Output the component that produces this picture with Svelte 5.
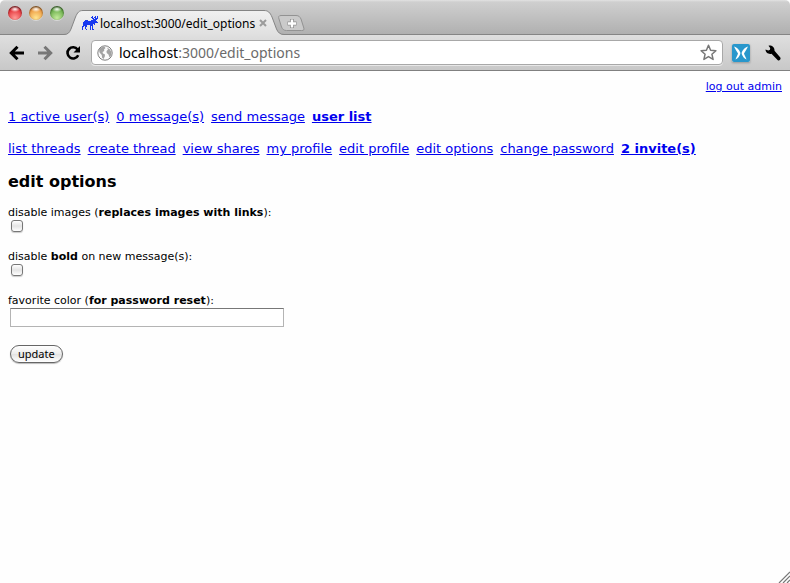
<script>
  let disableImages = $state(false);
  let disableBold = $state(false);
  let color = $state('');
  let address = 'edit_options';

  const userLinks = [
    { text: '1 active user(s)' },
    { text: '0 message(s)' },
    { text: 'send message' },
    { text: 'user list', bold: true }
  ];
  const mainLinks = [
    { text: 'list threads' },
    { text: 'create thread' },
    { text: 'view shares' },
    { text: 'my profile' },
    { text: 'edit profile' },
    { text: 'edit options' },
    { text: 'change password' },
    { text: '2 invite(s)', bold: true }
  ];
</script>

{#snippet links(items)}
  {#each items as item}
    <a href="#top" class:bold={item.bold}>{item.text}</a>
  {/each}
{/snippet}

<div class="window" id="top">
  <header>
    <div class="strip">
      <div class="lights">
        <button class="light red" aria-label="Close window"></button>
        <button class="light amber" aria-label="Minimize window"></button>
        <button class="light green" aria-label="Zoom window"></button>
      </div>
      <div class="tab">
        <svg class="shape" width="220" height="26" viewBox="0 0 220 26" aria-hidden="true">
          <defs>
            <linearGradient id="tabfill" x1="0" y1="0" x2="0" y2="1">
              <stop offset="0" stop-color="#f1f1f1" />
              <stop offset="1" stop-color="#dfdfdf" />
            </linearGradient>
          </defs>
          <path d="M0 24.5C4 24.5 5.500 22.500 7 19L11.500 7C13.500 2.500 15 .5 19 .5H200C204 .5 206 2.500 208 7L212.500 19C214 22.500 216 24.500 220 24.500V26H0Z" fill="url(#tabfill)" />
          <path d="M0 24.500C4 24.500 5.500 22.500 7 19L11.500 7C13.500 2.500 15 .5 19 .5H200C204 .5 206 2.500 208 7L212.500 19C214 22.500 216 24.500 220 24.500" fill="none" stroke="#858585" />
        </svg>
        <svg class="moose" width="16" height="14" viewBox="0 0 16 14" fill="#1738f0" shape-rendering="crispEdges" aria-hidden="true">
          <path d="M10 0h1v1h-1zM13 0h1v1h-1zM15 0h1v1h-1zM9 1h2v1H9zM12 1h2v1h-2zM15 1h1v1h-1zM10 2h2v1h-2zM13 2h3v1h-3zM11 3h4v1h-4zM3 4h3v1H3zM9 4h5v1H9zM2 5h13v1H2zM1 6h15v1H1zM1 7h12v1H1zM1 8h10v1H1zM12 8h1v1h-1zM1 9h4v1H1zM8 9h3v1H8zM0 10h2v1H0zM3 10h2v1H3zM8 10h1v4H8zM10 10h1v3h-1zM0 11h1v3H0zM3 11h1v2H3zM4 13h1v1H4zM10 13h2v1h-2z" />
        </svg>
        <span class="title">localhost:3000/edit_options</span>
        <button class="close" aria-label="Close tab">
          <svg width="8" height="8" viewBox="0 0 8 8"><path d="M1 1l6 6M7 1L1 7" stroke="#9b9b9b" stroke-width="2" /></svg>
        </button>
      </div>
      <button class="newtab" aria-label="New tab">
        <svg width="27" height="17" viewBox="0 0 27 17">
          <path d="M3 .5H18C21 .5 22 2 23 4L25.500 12C26.500 15 26 15.500 23.500 15.500H8.500C5.500 15.500 4.500 14 3.500 12L1 4C.3 2 .5 .5 3 .5Z" fill="#cacaca" stroke="#929292" />
          <path d="M14 4v9M9.500 8.500h9" stroke="#8e8e8e" stroke-width="4" />
          <path d="M14 4.500v8M10 8.500h8" stroke="#fff" stroke-width="2.400" />
        </svg>
      </button>
    </div>

    <div class="toolbar">
      <button aria-label="Back">
        <svg width="16" height="16" viewBox="0 0 16 16" fill="none" stroke="#000" stroke-width="3"><path d="M2.500 8H15M8.500 1.800L2.300 8l6.200 6.200" /></svg>
      </button>
      <button aria-label="Forward">
        <svg width="16" height="16" viewBox="0 0 16 16" fill="none" stroke="#777" stroke-width="3"><path d="M13.500 8H1M7.500 1.800L13.700 8l-6.200 6.200" /></svg>
      </button>
      <button aria-label="Reload">
        <svg width="16" height="16" viewBox="0 0 16 16"><path d="M12.600 4.500A5.600 5.600 0 1 0 13.200 10.200" fill="none" stroke="#000" stroke-width="2.600" /><path d="M15 1v6.500H8.500z" /></svg>
      </button>
      <div class="omnibox">
        <svg width="16" height="16" viewBox="0 0 16 16" aria-hidden="true">
          <circle cx="8" cy="8" r="7.200" fill="#fafafa" stroke="#7e7e7e" />
          <path d="M2 4.500C3.500 2.500 5.500 1.500 7.500 1.800L8.500 3 7 4.500 7.300 6 5.500 7 6 8.500 8 9.500 7.800 11.500 6.500 14 5 12.500 4.800 10 2.500 7.500zM10 2.500l3 2 1.500 3-.5 3-1.500 2-1-3-1.800-1.500L9.500 6l1.500-1.500z" fill="#a2a2a2" />
        </svg>
        <span class="url">localhost<i>:3000/{address}</i></span>
        <button aria-label="Bookmark this page">
          <svg width="17" height="17" viewBox="0 0 17 17"><path d="M8.500 1.300l2.100 4.900 5.300.5-4 3.500 1.200 5.200-4.600-2.800-4.600 2.800 1.200-5.200-4-3.500 5.300-.5z" fill="#fff" stroke="#777" stroke-width="1.500" stroke-linejoin="round" /></svg>
        </button>
      </div>
      <button class="ext" aria-label="Extension">
        <svg width="18" height="18" viewBox="0 0 18 18"><rect width="18" height="18" rx="2" fill="#2997cc" /><path d="M2 2.500C4.500 3.500 7 5 8.300 8.500L8.300 10C7.500 12 6 14.500 3.500 15.500 4 13.500 5.500 11.500 6 9.500 5 7.500 3 5 2 2.500zM16 2.500C13.500 3.500 11 5 9.700 8.500L9.700 10C10.500 12 12 14.500 14.500 15.500 14 13.500 12.500 11.500 12 9.500 13 7.500 15 5 16 2.500z" fill="#fff" /></svg>
      </button>
      <button class="wrench" aria-label="Settings">
        <svg width="16" height="16" viewBox="0 0 16 16"><path d="M3.500 .7C6.500 0 9.800 2 9.500 5.800L15.300 12.500C16.200 14.500 14.500 16 12.800 15.200L6.500 8.700C3.500 9.500 .5 7.500 .5 4.500L3.300 5.600 5 4.800 5.200 3z" /></svg>
      </button>
    </div>
  </header>

  <main>
    <p class="logout"><a href="#top">log out admin</a></p>
    <nav aria-label="User">{@render links(userLinks)}</nav>
    <nav aria-label="Main">{@render links(mainLinks)}</nav>
    <h1>edit options</h1>
    <form onsubmit={(e) => e.preventDefault()}>
      <div class="field">
        <label for="images">disable images (<b>replaces images with links</b>):</label>
        <input id="images" type="checkbox" bind:checked={disableImages} />
      </div>
      <div class="field">
        <label for="bold">disable <b>bold</b> on new message(s):</label>
        <input id="bold" type="checkbox" bind:checked={disableBold} />
      </div>
      <div class="field">
        <label for="color">favorite color (<b>for password reset</b>):</label>
        <input id="color" type="text" bind:value={color} />
      </div>
      <button class="update">update</button>
    </form>
  </main>

  <svg class="grip" width="12" height="12" viewBox="0 0 12 12" aria-hidden="true">
    <path d="M1 12L12 1M5 12l7-7M9 12l3-3" stroke="#777" stroke-width="1.200" />
  </svg>
</div>

<style>
  :global(body) {
    background: #fefefe;
  }
  .window {
    position: relative;
    min-height: 100vh;
    font-family: 'DejaVu Sans', Verdana, sans-serif;
    color: #000;
  }
  header {
    font-family: 'Noto Sans', 'Lucida Grande', sans-serif;
    border-radius: 5px 5px 0 0;
    overflow: hidden;
  }
  header button {
    display: flex;
    padding: 0;
    border: 0;
    background: none;
  }
  .strip {
    display: flex;
    box-sizing: border-box;
    height: 35px;
    border-bottom: 1px solid #858585;
    background: linear-gradient(#e2e2e2, #cfcfcf 2px, #b0b0b0);
  }
  .lights {
    display: flex;
    gap: 7px;
    padding: 6px 0 0 8px;
  }
  .light {
    width: 14px;
    height: 14px;
    border-radius: 50%;
    box-shadow: inset 0 1px 2px #0009, 0 1px 0 #fff6;
  }
  .light.red {
    background: radial-gradient(ellipse 5px 3px at 50% 22%, #fff, #fff0), radial-gradient(circle at 50% 85%, #ff9a96, #e5343a 65%, #a92328);
  }
  .light.amber {
    background: radial-gradient(ellipse 5px 3px at 50% 22%, #fff, #fff0), radial-gradient(circle at 50% 85%, #ffe590, #ee9b42 65%, #a76424);
  }
  .light.green {
    background: radial-gradient(ellipse 5px 3px at 50% 22%, #fff, #fff0), radial-gradient(circle at 50% 85%, #c4eb9c, #69ad4a 65%, #3d762b);
  }
  .tab {
    position: relative;
    display: flex;
    align-items: center;
    box-sizing: border-box;
    width: 220px;
    height: 26px;
    margin-top: 10px;
    padding: 0 17px 0 18px;
  }
  .shape {
    position: absolute;
    inset: 0;
  }
  .moose,
  .title,
  .close {
    position: relative;
  }
  .title {
    flex: 1;
    margin-left: 2px;
    font-size: 12px;
    white-space: nowrap;
  }
  .newtab {
    height: 17px;
    margin: 15px 0 0 -6px;
  }
  .toolbar {
    display: flex;
    align-items: center;
    gap: 12px;
    box-sizing: border-box;
    height: 36px;
    padding: 0 9px;
    border-bottom: 1px solid #808080;
    background: linear-gradient(#dfdfdf, #c8c8c8);
  }
  .omnibox {
    display: flex;
    flex: 1;
    align-items: center;
    gap: 6px;
    box-sizing: border-box;
    height: 25px;
    margin: 0 -3px 0 -2px;
    padding: 0 5px;
    border: 1px solid #a8a8a8;
    border-radius: 4px;
    background: #fff;
    box-shadow: 0 1px 0 #fff8;
  }
  .url {
    flex: 1;
    font-size: 14px;
    line-height: 20px;
  }
  .url i {
    font-style: normal;
    color: #6b6b6b;
  }
  .ext {
    margin-right: 3px;
    box-shadow: 0 1px 2px #0004;
  }
  main {
    padding: 10px 8px;
  }
  .logout {
    margin: 0;
    font-size: 11px;
    line-height: 12px;
    text-align: right;
  }
  nav {
    display: flex;
    flex-wrap: wrap;
    column-gap: 7px;
    margin: 16px 0;
    font-size: 13px;
    line-height: 16px;
  }
  a {
    color: #0000ee;
  }
  .bold {
    font-weight: bold;
  }
  h1 {
    margin: 0 0 15px;
    font-size: 16px;
    line-height: 18px;
  }
  .field {
    display: flex;
    flex-direction: column;
    align-items: flex-start;
    margin-bottom: 16px;
    font-size: 11px;
    line-height: 14px;
  }
  input {
    box-sizing: border-box;
    appearance: none;
    background: #fff;
  }
  input[type='checkbox'] {
    width: 12px;
    height: 12px;
    margin: 0 3px 2px;
    border: 1px solid #777;
    border-radius: 3px;
    background: linear-gradient(#fff, #e4e4e4 50%, #fff);
    box-shadow: 0 1px 1px #0003;
  }
  input[type='checkbox']:checked {
    background: #555;
  }
  input[type='text'] {
    width: 274px;
    max-width: 100%;
    height: 19px;
    margin: 0 2px;
    border: 1px solid #b4b4b4;
    border-top-color: #777;
  }
  .update {
    height: 18px;
    margin: 0 2px;
    padding: 0 7px;
    border: 1px solid #666;
    border-radius: 9px;
    background: linear-gradient(#fff, #ececec 50%, #e2e2e2 50%, #fff);
    box-shadow: 0 1px 1px #0004;
    font: 11px/14px 'Noto Sans', 'Lucida Grande', sans-serif;
  }
  .grip {
    position: absolute;
    right: 0;
    bottom: 0;
  }
</style>
